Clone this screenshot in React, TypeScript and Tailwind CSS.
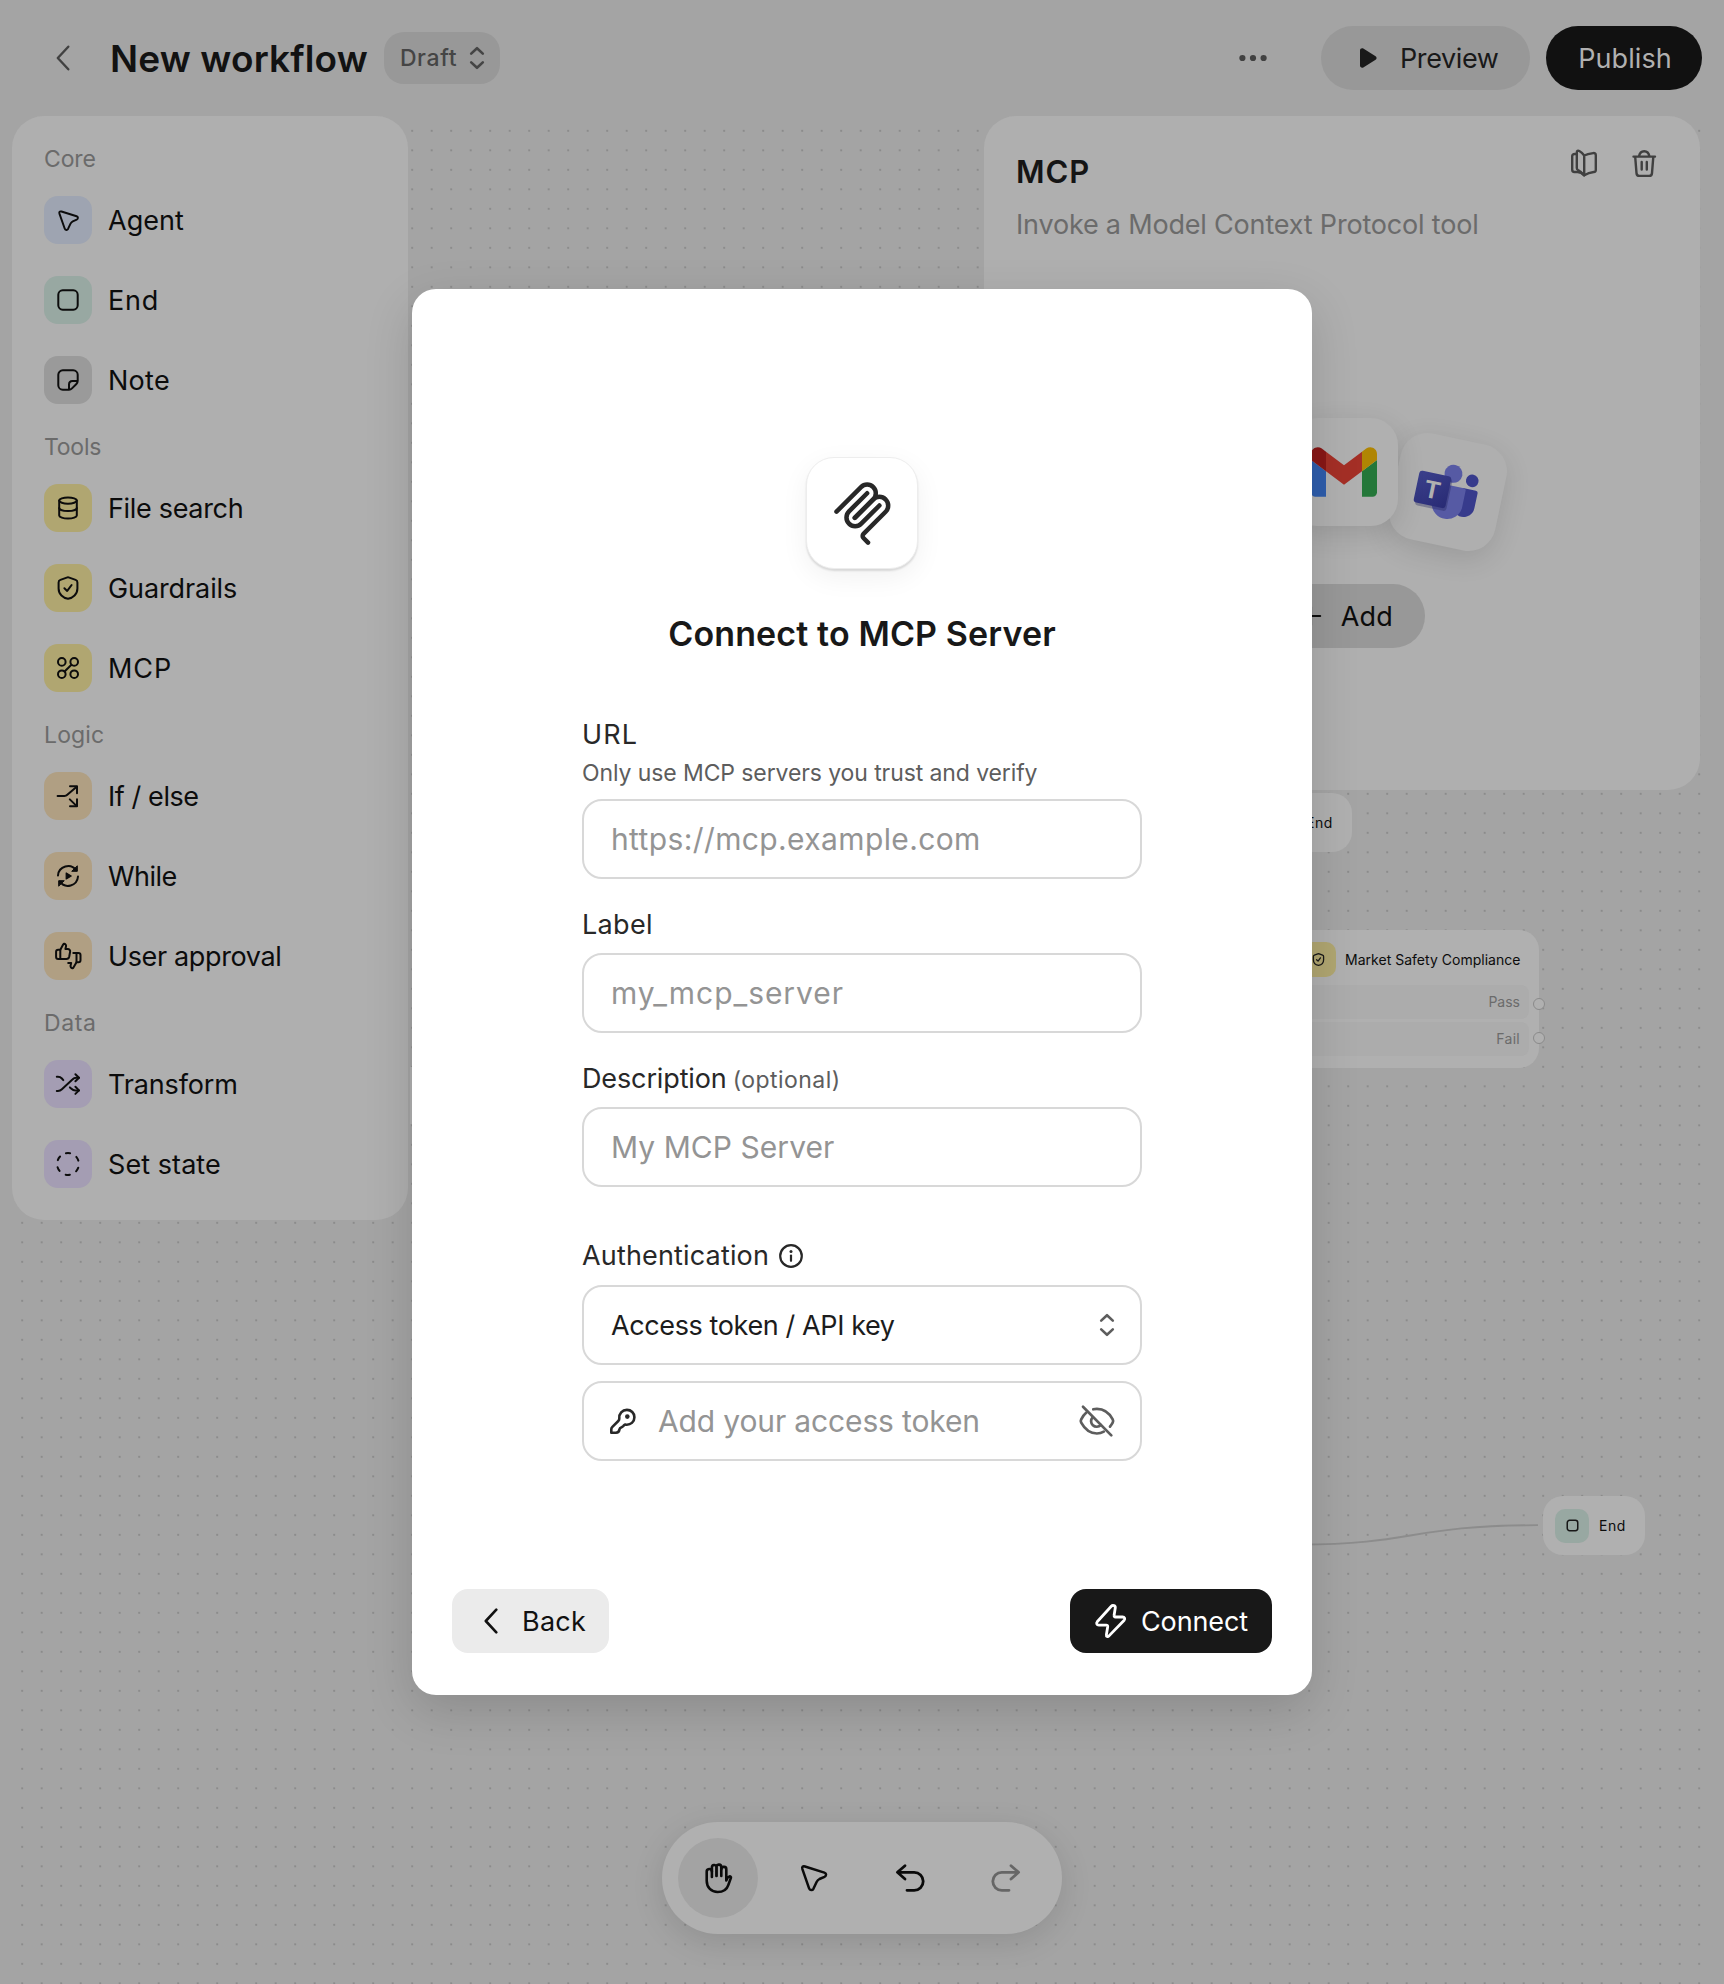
import type { ReactNode } from 'react';

type IconProps = { className?: string; children?: ReactNode; box?: number; size?: number; sw?: number };

function Icon({ className = '', children, box = 24, size = 24, sw = 2 }: IconProps) {
  return (
    <svg
      className={`shrink-0 overflow-visible ${className}`}
      width={size}
      height={size}
      viewBox={`0 0 ${box} ${box}`}
      fill="none"
      stroke="currentColor"
      strokeWidth={sw}
      strokeLinecap="round"
      strokeLinejoin="round"
      aria-hidden="true"
    >
      {children}
    </svg>
  );
}

const cursorPath =
  'M4.4 7.2C3.7 4.9 4.9 3.9 7 4.5L26.4 10.6C28.6 11.4 28.6 13.8 26.5 14.8L21.5 17C20 17.8 19.3 18.6 18.6 20L15.4 26.8C14.4 28.6 11.8 28.5 11.1 26.3Z';

const CursorIcon = ({ size }: { size: number }) => (
  <Icon box={32} size={size} sw={2.5}>
    <path d={cursorPath} />
  </Icon>
);

const SquareIcon = ({ size = 24, sw = 2 }: { size?: number; sw?: number }) => (
  <Icon size={size} sw={sw}>
    <rect x="2.3" y="2.3" width="19.4" height="19.4" rx="4.4" />
  </Icon>
);

const NoteIcon = () => (
  <Icon>
    <path d="M13 21.7H6.8a4.5 4.5 0 0 1-4.5-4.5V6.8a4.5 4.5 0 0 1 4.5-4.5h10.4a4.5 4.5 0 0 1 4.5 4.5v6c0 1.3-.5 2.4-1.3 3.2l-4.4 4.4c-.8.8-1.8 1.3-3 1.3Zm0 0v-5.2c0-2 1.5-3.5 3.5-3.5h5.2" />
  </Icon>
);

const DatabaseIcon = () => (
  <Icon>
    <ellipse cx="12" cy="4.6" rx="8.8" ry="3.1" />
    <path d="M3.2 4.6v14.8c0 1.7 3.9 3.2 8.8 3.2s8.8-1.5 8.8-3.2V4.6" />
    <path d="M3.2 12c0 1.7 3.9 3.1 8.8 3.1s8.8-1.4 8.8-3.1" />
  </Icon>
);

const ShieldIcon = ({ size = 24, sw = 2 }: { size?: number; sw?: number }) => (
  <Icon size={size} sw={sw}>
    <path d="M10.7 1.6a3.6 3.6 0 0 1 2.6 0l6.3 2.3a2.7 2.7 0 0 1 1.8 2.6v5.9c0 5.8-4.5 9.6-9.4 10.3-4.900-.7-9.400-4.500-9.400-10.300V6.500a2.700 2.700 0 0 1 1.800-2.600Z" />
    <path d="M8.4 12.300l2.800 2.600 4.400-5.900" />
  </Icon>
);

const NodesIcon = () => (
  <Icon>
    <circle cx="5.800" cy="5.900" r="3.800" />
    <circle cx="18.200" cy="5.900" r="3.800" />
    <circle cx="5.800" cy="18.200" r="3.800" />
    <circle cx="18.200" cy="18.200" r="3.800" />
    <path d="M15.400 8.700l-6.800 6.800" />
  </Icon>
);

const BranchIcon = () => (
  <Icon>
    <path d="M1.600 12H8.400c1.200 0 2.100-.4 2.900-1.200L20.400 2.900" />
    <path d="M14 2.200h7v7" />
    <path d="M13.800 15.400l6.700 6.500" />
    <path d="M14 22.300h7v-7" />
  </Icon>
);

const LoopIcon = () => (
  <Icon>
    <path d="M2 11.500A10.100 10.100 0 0 1 20.200 6.300" />
    <path d="M21.300 2.200v5.100h-5.200Z" fill="currentColor" strokeWidth="1" />
    <path d="M22 12.500A10.100 10.100 0 0 1 3.800 17.700" />
    <path d="M2.700 21.800v-5.100h5.200Z" fill="currentColor" strokeWidth="1" />
    <path d="M10.200 9v6l5-3Z" fill="currentColor" strokeWidth="1.200" />
  </Icon>
);

const ThumbsIcon = () => (
  <Icon>
    <path d="M4.300 5.800L7.300.2c.2-.4.600-.6 1-.5 1.300.3 2 1.500 1.700 2.700L9.400 5h2.300c1.700 0 2.700 1.300 2.400 2.800l-.9 5c-.3 1.400-1.300 2.200-2.700 2.200H2.200C1 15 .1 14.200.1 13V7.800c0-1.200.9-2 2.100-2Z" />
    <path d="M4.300 5.800V15" />
    <path d="M17.300 9h5.100c1.200 0 2.100.8 2.100 2v5.200c0 1.200-.9 2-2.100 2h-1.900l-3.200 5.600c-.2.4-.6.600-1 .5-1.300-.3-2-1.500-1.700-2.700l.6-2.700h-3" />
    <path d="M20.500 9v9.200" />
  </Icon>
);

const ShuffleIcon = () => (
  <Icon>
    <path d="M.8 19h1.100c1.600 0 2.900-.6 4-1.800L16.400 7.500c1.100-1.200 2.400-1.800 4-1.800H23" />
    <path d="M.8 4.700h1.100c1.600 0 2.900.6 4 1.800l1.400 1.600" />
    <path d="M13.900 15.400l1.500 1.300c1.100 1.100 2.400 1.700 4 1.700H23" />
    <path d="M19.400 2.200L23 5.700l-3.600 3.600M19.400 14.800l3.600 3.600-3.600 3.500" />
  </Icon>
);

const DashedCircleIcon = () => (
  <Icon>
    <circle cx="12" cy="12" r="10.900" strokeDasharray="4.200 7.214" transform="rotate(-101 12 12)" />
  </Icon>
);

const ChevronLeft = ({ className = '', sw = 2.4 }: { className?: string; sw?: number }) => (
  <svg className={className} width="14" height="26" viewBox="0 0 14 26" fill="none" stroke="currentColor" strokeWidth={sw} strokeLinecap="round" strokeLinejoin="round">
    <path d="M12.300 1.700L1.800 13l10.500 11.300" />
  </svg>
);

const ChevronsUpDown = ({ className = '' }: { className?: string }) => (
  <svg className={className} width="16" height="24" viewBox="0 0 16 24" fill="none" stroke="currentColor" strokeWidth="2.600" strokeLinecap="round" strokeLinejoin="round">
    <path d="M2.200 7.600L8 2.200l5.800 5.400M2.200 16.400L8 21.800l5.800-5.400" />
  </svg>
);

type Item = { label: string; tile: string; icon: ReactNode; track: string };
const sections: { title: string; track: string; items: Item[] }[] = [
  {
    title: 'Core',
    track: 'tracking-[-0.16px]',
    items: [
      { label: 'Agent', tile: 'bg-[#9ea4b1]', icon: <CursorIcon size={25} />, track: 'tracking-normal' },
      { label: 'End', tile: 'bg-[#98a8a2]', icon: <SquareIcon />, track: 'tracking-[0.8px]' },
      { label: 'Note', tile: 'bg-[#9a9a9a]', icon: <NoteIcon />, track: 'tracking-[0.27px]' },
    ],
  },
  {
    title: 'Tools',
    track: 'tracking-[-0.25px]',
    items: [
      { label: 'File search', tile: 'bg-[#b0a671]', icon: <DatabaseIcon />, track: 'tracking-[-0.32px]' },
      { label: 'Guardrails', tile: 'bg-[#b0a671]', icon: <ShieldIcon />, track: 'tracking-[-0.1px]' },
      { label: 'MCP', tile: 'bg-[#b0a671]', icon: <NodesIcon />, track: 'tracking-[0.9px]' },
    ],
  },
  {
    title: 'Logic',
    track: 'tracking-[0.13px]',
    items: [
      { label: 'If / else', tile: 'bg-[#b09f83]', icon: <BranchIcon />, track: 'tracking-[-0.42px]' },
      { label: 'While', tile: 'bg-[#b09f83]', icon: <LoopIcon />, track: 'tracking-[-0.54px]' },
      { label: 'User approval', tile: 'bg-[#b09f83]', icon: <ThumbsIcon />, track: 'tracking-[-0.36px]' },
    ],
  },
  {
    title: 'Data',
    track: 'tracking-[0.6px]',
    items: [
      { label: 'Transform', tile: 'bg-[#a49db3]', icon: <ShuffleIcon />, track: 'tracking-[-0.14px]' },
      { label: 'Set state', tile: 'bg-[#a49db3]', icon: <DashedCircleIcon />, track: 'tracking-[0.07px]' },
    ],
  },
];

function Header() {
  return (
    <header className="relative flex h-[116px] shrink-0 items-center pr-[22px] pl-[56px]">
      <ChevronLeft className="text-[#414141]" />
      <h1 className="ml-[40px] text-[37px] leading-none font-semibold tracking-[0.14px] text-[#121212]">New workflow</h1>
      <button className="ml-[16px] flex h-[52px] w-[116px] items-center justify-between rounded-[20px] bg-[#989898] pr-[15px] pl-[16px] text-[#454545]">
        <span className="text-[23px] leading-none font-medium tracking-[0.59px]">Draft</span>
        <ChevronsUpDown />
      </button>
      <div className="ml-auto flex items-center">
        <svg width="28" height="8" viewBox="0 0 28 8" fill="#414141">
          <circle cx="3.400" cy="4" r="3.100" />
          <circle cx="14" cy="4" r="3.100" />
          <circle cx="24.600" cy="4" r="3.100" />
        </svg>
        <button className="ml-[54px] flex h-16 w-[209px] items-center rounded-full bg-[#989898] pl-[39px] text-[#191919]">
          <svg width="17" height="20" viewBox="0 0 17 20" fill="currentColor">
            <path d="M0 2.400C0 .6 1.800-.4 3.300.5L15.600 8.300c1.300.8 1.300 2.600 0 3.400L3.300 19.500C1.800 20.400 0 19.400 0 17.600Z" />
          </svg>
          <span className="ml-[23px] text-[27px] leading-none tracking-[-0.39px]">Preview</span>
        </button>
        <button className="ml-4 flex h-16 w-[156px] items-center justify-center rounded-full bg-[#111111] pl-[2px] text-[27px] leading-none tracking-[0.07px] text-[#b0b0b0]">
          Publish
        </button>
      </div>
    </header>
  );
}

function Sidebar() {
  return (
    <aside className="relative h-[1104px] w-[396px] rounded-[32px] bg-[#afafaf] px-8 pt-4">
      {sections.map((s) => (
        <section key={s.title}>
          <h2 className={`flex h-12 items-center pt-[6px] text-[23px] leading-none text-[#6b6b6b] ${s.track}`}>{s.title}</h2>
          {s.items.map((it) => (
            <div key={it.label} className="flex h-20 items-center gap-4">
              <div className={`flex size-12 items-center justify-center rounded-[14px] text-[#0c0c0c] ${it.tile}`}>{it.icon}</div>
              <span className={`text-[27px] leading-none text-[#0c0c0c] ${it.track}`}>{it.label}</span>
            </div>
          ))}
        </section>
      ))}
    </aside>
  );
}

function GmailLogo() {
  return (
    <svg width="66" height="50" viewBox="52 42 88 66">
      <path fill="#2e5dac" d="M58 108h14V74L52 59v43c0 3.320 2.690 6 6 6" />
      <path fill="#247739" d="M120 108h14c3.320 0 6-2.690 6-6V59l-20 15" />
      <path fill="#b08503" d="M120 48v26l20-15v-8c0-7.420-8.470-11.650-14.400-7.200" />
      <path fill="#a42f26" d="M72 74V48l24 18 24-18v26L96 92" />
      <path fill="#881716" d="M52 51v8l20 15V48l-5.600-4.200c-5.940-4.450-14.400-.22-14.400 7.200" />
    </svg>
  );
}

function TeamsLogo() {
  return (
    <svg width="108" height="108" viewBox="-54 -54 108 108">
      <defs>
        <linearGradient id="teams-square" x1="0" y1="0" x2="1" y2="1">
          <stop offset="0" stopColor="#3c418c" />
          <stop offset="1" stopColor="#282a74" />
        </linearGradient>
      </defs>
      <circle cx="21.400" cy="-15.900" r="6.300" fill="#373b8c" />
      <path d="M14-7h13a2.200 2.200 0 0 1 2.200 2.200V10A11 11 0 0 1 12 19.500Z" fill="#373b8c" />
      <circle cx="1.600" cy="-18.900" r="9" fill="#565aa4" />
      <path d="M-12-7H14.800A2.200 2.200 0 0 1 17-4.800V13A15.500 15.500 0 0 1-13.500 15Z" fill="#565aa4" />
      <rect x="-30" y="-13.500" width="32" height="33" rx="3" fill="#1f215c" opacity=".35" />
      <rect x="-32" y="-15.500" width="32.500" height="32.500" rx="3" fill="url(#teams-square)" />
      <text x="-15.800" y="9.700" textAnchor="middle" fontFamily="Liberation Sans" fontWeight="700" fontSize="25" fill="#b0b0b0">
        T
      </text>
    </svg>
  );
}

function McpPanel() {
  return (
    <section className="relative h-[674px] w-[716px] rounded-[32px] bg-[#afafaf] px-8 pt-[33px]">
      <div className="flex items-start justify-between">
        <h2 className="pt-[7px] text-[31px] leading-[32px] font-semibold tracking-[0.900px] text-[#151515]">MCP</h2>
        <div className="flex gap-8 pr-[10px] text-[#404040]">
          <Icon box={28} size={28} sw={2.400}>
            <path d="M14.200 6.500C17 5.200 20 4.600 23.200 4.100c1.600-.2 2.600.6 2.600 2.100v14.700c0 1.200-.7 2-2 2.100-3.700.4-6.700 1.500-9.600 3.300V6.500C12.800 4.500 11 2.900 9.300 2c-1.400-.7-2.500-.1-2.500 1.400v15.500c0 1 .4 1.700 1.200 2.200 2.400 1.300 4.400 3 6.200 5.200" />
            <path d="M6.800 5H4.600C3.100 5 2.200 5.800 2.200 7v13.800c0 1.400.8 2.200 2.200 2.200h3.200c2.400.1 4.400 1 6.600 3.300" />
          </Icon>
          <Icon box={28} size={28} sw={2.400}>
            <path d="M3.500 7.600h21.500M9 7.300c.6-3.300 2.400-5.100 5.200-5.100s4.600 1.800 5.200 5.100M5.200 7.800l1.300 16.300c.1 1.700 1.200 2.800 2.900 2.800h9.700c1.700 0 2.800-1.100 2.900-2.800l1.300-16.300M11.700 13v7.500M16.800 13v7.500" />
          </Icon>
        </div>
      </div>
      <p className="mt-[21px] text-[27px] leading-[32px] tracking-[-0.190px] text-[#6b6b6b]">Invoke a Model Context Protocol tool</p>
      <div className="mt-[177px] flex h-[120px] justify-center">
        <div className="relative w-[108px]">
          <div className="absolute top-[20px] left-[106px] size-[108px] rotate-12 rounded-[27px] bg-[#afafaf] shadow-[0_8px_28px_rgba(0,0,0,0.120)]">
            <TeamsLogo />
          </div>
          <div className="absolute top-0 left-[2px] flex size-[108px] items-center justify-center rounded-[27px] bg-[#b0b0b0] shadow-[0_8px_28px_rgba(0,0,0,0.120)]">
            <GmailLogo />
          </div>
        </div>
      </div>
      <div className="mt-[46px] flex justify-center">
        <button className="flex h-16 w-[166px] items-center justify-between rounded-full bg-[#989898] pr-[32px] pl-[41px] text-[#0c0c0c]">
          <Icon size={22} sw={2.300}>
            <path d="M12 2v20M2 12h20" />
          </Icon>
          <span className="text-[27px] leading-none tracking-[0.170px]">Add</span>
        </button>
      </div>
    </section>
  );
}

function EndNode({ className }: { className: string }) {
  return (
    <div className={`absolute flex h-[59px] w-[102px] items-center rounded-[20px] bg-[#b0b0b0] pl-3 ${className}`}>
      <div className="flex size-[34px] items-center justify-center rounded-[10px] bg-[#98a8a2] text-[#181818]">
        <SquareIcon size={13} sw={2.800} />
      </div>
      <span className="ml-[10px] text-[14px] leading-none tracking-[0.500px] text-[#0c0c0c]">End</span>
    </div>
  );
}

function Canvas() {
  return (
    <div className="absolute inset-0">
      <div className="absolute top-[122px] right-[12px] bottom-0 left-[12px] bg-[radial-gradient(circle_at_center,#808080_0.500px,transparent_1.100px)] bg-[size:19.500px_19.500px] bg-[position:0.450px_-0.950px]" />
      <svg className="absolute top-[1500px] left-[1300px]" width="240" height="60" viewBox="0 0 240 60" fill="none" stroke="#8c8c8c" strokeWidth="1.800">
        <path d="M0 44.500C115 44.500 110 25.200 238 25.200" />
      </svg>
      <div className="absolute top-[1067px] left-[410px] h-[57px] w-[80px] bg-[#b0b0b0]" />
      <EndNode className="top-[793px] left-[1250px]" />
      <EndNode className="top-[1496px] left-[1543px]" />
      <div className="absolute top-[930px] left-[1291px] h-[138px] w-[248px] rounded-[20px] bg-[#b0b0b0] px-[10px] pt-3">
        <div className="flex items-center">
          <div className="flex size-[35px] items-center justify-center rounded-[10px] bg-[#b0a671] text-[#181818]">
            <ShieldIcon size={13} sw={2.400} />
          </div>
          <span className="ml-[9px] text-[14px] leading-none tracking-[0.020px] whitespace-nowrap text-[#0c0c0c]">Market Safety Compliance</span>
        </div>
        <div className="mt-2 flex h-[34px] items-center justify-end rounded-[8px] bg-[#acacac] pr-[9px] text-[14px] leading-none text-[#6b6b6b]">Pass</div>
        <div className="mt-[3px] flex h-[34px] items-center justify-end rounded-[8px] bg-[#acacac] pr-[9px] text-[14px] leading-none tracking-[0.280px] text-[#6b6b6b]">Fail</div>
        <div className="absolute top-[68px] right-[-6px] size-3 rounded-full border border-[#8a8a8a] bg-[#b0b0b0]" />
        <div className="absolute top-[102px] right-[-6px] size-3 rounded-full border border-[#8a8a8a] bg-[#b0b0b0]" />
      </div>
    </div>
  );
}

function Toolbar() {
  return (
    <div className="absolute inset-x-0 bottom-[50px] flex justify-center">
      <div className="flex h-28 w-[400px] items-center gap-4 rounded-full bg-[#b0b0b0] px-4 text-[#0a0a0a] shadow-[0_8px_32px_rgba(0,0,0,0.120)]">
        <div className="flex size-20 items-center justify-center rounded-full bg-[#a3a3a3]">
          <Icon box={32} size={32} sw={2.600}>
            <path d="M9.900 9.400a2.600 2.600 0 0 0-5.200.4v9c0 6.700 4.700 11.200 10.900 11.200 5.400 0 9.300-2.600 10.800-7.200l2.500-6.900c.4-1.100-.6-1.700-1.500-1.500-1 .2-1.700.9-2.100 1.900l-1 2.200V7.500a2.500 2.500 0 0 0-5-.3" />
            <path d="M9.900 15V5.300a2.400 2.400 0 0 1 4.700-.6V14M14.400 14V4.400a2.500 2.500 0 0 1 4.900.6V14" />
          </Icon>
        </div>
        <div className="flex size-20 items-center justify-center">
          <CursorIcon size={32} />
        </div>
        <div className="flex size-20 items-center justify-center">
          <Icon box={32} size={32} sw={2.800}>
            <path d="M11 3.700L3.400 10.300 11 17M3.800 10.300h16.400a9 9 0 0 1 0 18H13" />
          </Icon>
        </div>
        <div className="flex size-20 items-center justify-center text-[#666666]">
          <Icon box={32} size={32} sw={2.800} className="-scale-x-100">
            <path d="M11 3.700L3.400 10.300 11 17M3.800 10.300h16.400a9 9 0 0 1 0 18H13" />
          </Icon>
        </div>
      </div>
    </div>
  );
}

const field =
  'flex h-20 w-full items-center rounded-[20px] border-2 border-[#d8d8d8] bg-white pl-[27px] text-[30px] text-[#282828] outline-none placeholder:text-[#949494]';
const label = 'flex h-8 items-center text-[27px] leading-[32px] text-[#282828]';

function ConnectDialog() {
  return (
    <div role="dialog" className="flex h-[1406px] w-[900px] flex-col items-center rounded-[24px] bg-white px-10 pt-[168px] pb-[42px] shadow-[0_16px_48px_rgba(0,0,0,0.150)]">
      <div className="flex size-28 items-center justify-center rounded-[28px] border border-[#ededed] bg-white shadow-[0_2px_2px_rgba(0,0,0,0.120),0_8px_28px_rgba(0,0,0,0.060)]">
        <svg width="65" height="65" viewBox="0 0 180 180" fill="none" stroke="#282828" strokeWidth="12.500" strokeLinecap="round">
          <path d="M18 84.853L85.882 16.971C95.255 7.598 110.451 7.598 119.823 16.971C129.196 26.343 129.196 41.539 119.823 50.912L68.558 102.177" />
          <path d="M69.265 101.470L119.823 50.912C129.196 41.539 144.392 41.539 153.765 50.912L154.118 51.265C163.491 60.638 163.491 75.834 154.118 85.206L92.725 146.600C89.601 149.724 89.601 154.789 92.725 157.913L105.331 170.520" />
          <path d="M102.853 33.941L52.648 84.146C43.276 93.518 43.276 108.714 52.648 118.087C62.021 127.459 77.217 127.459 86.589 118.087L136.794 67.882" />
        </svg>
      </div>
      <h2 className="mt-[45px] text-[34px] leading-[40px] font-semibold tracking-[0.130px] text-[#181818]">Connect to MCP Server</h2>
      <div className="mt-[65px] flex w-[560px] flex-col">
        <div className={`${label} tracking-[1.100px]`}>URL</div>
        <div className="mt-[8px] text-[23px] leading-[28px] tracking-[-0.100px] text-[#5d5d5d]">Only use MCP servers you trust and verify</div>
        <input className={`${field} mt-[12px] tracking-[0.380px]`} placeholder="https://mcp.example.com" />
        <div className={`${label} mt-[30px] tracking-[0.320px]`}>Label</div>
        <input className={`${field} mt-[12px] tracking-[0.950px]`} placeholder="my_mcp_server" />
        <div className={`${label} mt-[30px] gap-[6px] tracking-[-0.130px]`}>
          <span>Description</span>
          <span className="pt-[2px] text-[23px] tracking-[0.450px] text-[#5d5d5d]">(optional)</span>
        </div>
        <input className={`${field} mt-[12px] tracking-[0.050px]`} placeholder="My MCP Server" />
        <div className={`${label} mt-[53px] gap-[10px] tracking-[0.160px]`}>
          Authentication
          <Icon size={24} sw={2.200}>
            <circle cx="12" cy="12" r="10.800" />
            <path d="M12 11.500v5.300" />
            <circle cx="12" cy="7.400" r="1.500" fill="currentColor" stroke="none" />
          </Icon>
        </div>
        <div className={`${field} mt-[13px] justify-between pr-[25px]`}>
          <span className="text-[27px] leading-none tracking-[-0.390px] text-[#1c1c1c]">Access token / API key</span>
          <ChevronsUpDown className="text-[#5d5d5d]" />
        </div>
        <div className={`${field} mt-[16px] justify-between pr-[26px]`}>
          <Icon box={30} size={30} sw={2.600} className="-ml-[3px]">
            <path d="M11.300 12.400C10.800 7.600 14.300 3.900 18.900 3.900c4.300 0 7.500 3.200 7.500 7.300 0 4.700-3.700 8-8.700 7.400-.6-.1-1.200.1-1.600.6l-.9 1c-.6.6-1.200 1-2 1.200-1 .3-1.500.9-1.700 1.900-.3 2.200-1.500 3.400-3.500 3.400H3.300v-3.400c0-1 .4-1.800 1.100-2.500l5.900-5.800c.8-.8 1.100-1.600 1-2.600Z" />
            <circle cx="19.300" cy="10.600" r="2.300" fill="currentColor" stroke="none" />
          </Icon>
          <input className="ml-[20px] min-w-0 flex-1 tracking-[-0.140px] outline-none placeholder:text-[#949494]" placeholder="Add your access token" />
          <Icon box={36} size={36} sw={2.700} className="-mr-[1px] text-[#5d5d5d]">
            <path d="M4 3.800L32.300 32.400" />
            <path d="M14.300 6.300C15.500 6 16.600 5.900 17.900 5.900c8 0 13 5.300 15.800 10.400.6 1.100.6 2.300 0 3.400-.8 1.400-1.700 2.700-2.700 3.900" />
            <path d="M7.400 9.600C5.200 11.500 3.400 14 2.200 16.300c-.6 1.100-.6 2.300 0 3.400C5 24.800 10.200 30.500 17.900 30.500c2.600 0 4.900-.7 6.900-1.900" />
            <path d="M13.600 14.300a5.600 5.600 0 0 0 8.200 7.700" />
          </Icon>
        </div>
      </div>
      <div className="mt-auto flex w-full justify-between">
        <button className="flex h-16 w-[157px] items-center rounded-[16px] bg-[#ebebeb] pl-[32px] text-[27px] leading-none tracking-[0.250px] text-[#111111]">
          <ChevronLeft sw={2.600} />
          <span className="ml-[24px]">Back</span>
        </button>
        <button className="flex h-16 w-[202px] items-center rounded-[16px] bg-[#181818] pl-[23px] text-[27px] leading-none tracking-[-0.130px] text-white">
          <Icon box={36} size={36} sw={2.800}>
            <path d="M18.300 3.300L4.200 18.800c-1.100 1.300-.5 3.300 1.600 3.300h7.400c1 0 1.600.7 1.500 1.600l-1.300 8c-.3 1.900 1.400 2.500 2.600 1.200L31.200 17.200c1.100-1.300.4-3.200-1.600-3.200h-7.100c-1 0-1.600-.7-1.400-1.700l1.200-7.500c.3-2.100-2.500-3.200-4-1.500Z" />
          </Icon>
          <span className="ml-[12px]">Connect</span>
        </button>
      </div>
    </div>
  );
}

export default function App() {
  return (
    <div className="relative flex h-[1984px] w-[1724px] flex-col overflow-hidden bg-[#a4a4a4] font-['Inter',sans-serif]">
      <Canvas />
      <Header />
      <main className="relative flex flex-1 items-start justify-between pr-6 pl-3">
        <Sidebar />
        <McpPanel />
      </main>
      <Toolbar />
      <div className="absolute inset-0 flex items-center justify-center">
        <ConnectDialog />
      </div>
    </div>
  );
}
